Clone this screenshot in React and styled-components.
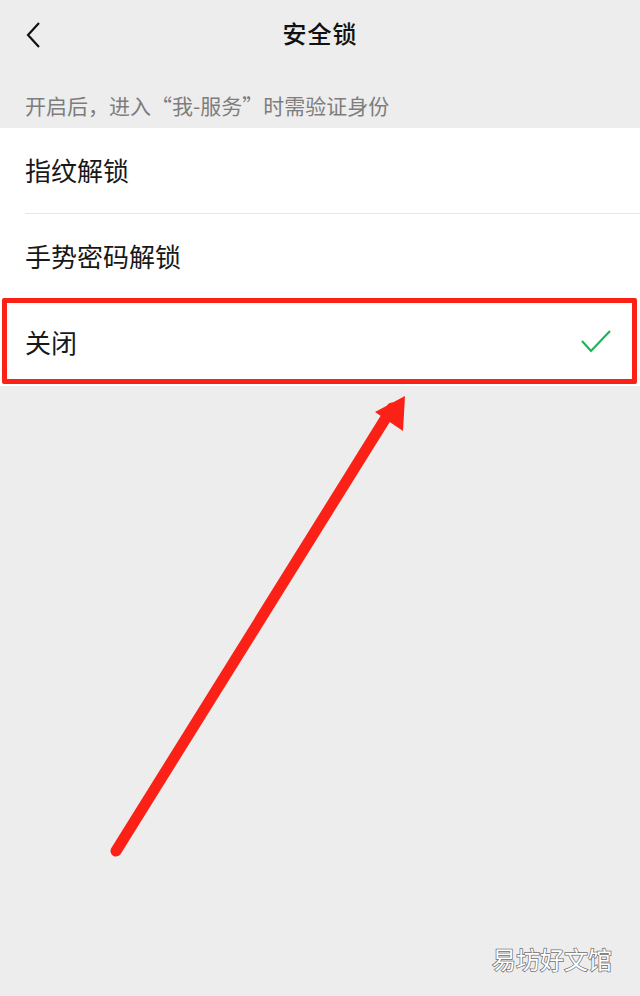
import styled, { createGlobalStyle } from 'styled-components'

const Global = createGlobalStyle`
  html, body {
    margin: 0;
    padding: 0;
    background: #ededed;
  }
  body {
    font-family: "Noto Sans CJK SC", "Noto Sans", sans-serif;
  }
`

const Page = styled.div`
  position: relative;
  width: 640px;
  height: 996px;
  overflow: hidden;
  background: #ededed;
  display: flex;
  flex-direction: column;
`

const NavBar = styled.header`
  height: 70px;
  box-sizing: border-box;
  padding-bottom: 6px;
  display: flex;
  align-items: center;
  justify-content: center;
  position: relative;
`

const BackButton = styled.button`
  position: absolute;
  left: 18px;
  top: 18px;
  width: 32px;
  height: 34px;
  padding: 0;
  border: none;
  background: transparent;
  display: flex;
  align-items: center;
  justify-content: center;
`

const Title = styled.h1`
  margin: 0;
  font-size: 24px;
  font-weight: 500;
  color: #111;
  letter-spacing: 1px;
`

const Caption = styled.p`
  margin: 0;
  height: 58px;
  box-sizing: border-box;
  padding: 21px 0 0 25px;
  font-size: 21px;
  line-height: 28px;
  color: #7d7d7d;
`

const List = styled.ul`
  margin: 0;
  padding: 0;
  list-style: none;
  background: #fff;
`

const Row = styled.li`
  position: relative;
  height: 86px;
  box-sizing: border-box;
  padding: 0 28px 3px 25px;
  display: flex;
  align-items: center;
  justify-content: space-between;
  font-size: 26px;
  color: #181818;

  & + &::before {
    content: '';
    position: absolute;
    left: 25px;
    right: 0;
    top: -1px;
    height: 1px;
    background: #e6e6e6;
  }

  ${({ $marked }) =>
    $marked &&
    `
    &::after {
      content: '';
      position: absolute;
      left: 2px;
      right: 3px;
      top: -2px;
      bottom: 2px;
      border: 5px solid #fb2117;
      border-radius: 2px;
    }
  `}
`

const Overlay = styled.svg`
  position: absolute;
  left: 0;
  top: 0;
  pointer-events: none;
`

const Watermark = styled.div`
  position: absolute;
  right: 28px;
  bottom: 20px;
  font-size: 24px;
  color: #fff;
  -webkit-text-stroke: 1.5px #707070;
  paint-order: stroke fill;
`

const Check = () => (
  <svg width="32" height="26" viewBox="0 0 32 26">
    <polyline points="2,12 11,22 30,2" fill="none" stroke="#1fb35a" strokeWidth="2.2" />
  </svg>
)

export default function App() {
  const options = [
    { label: '指纹解锁' },
    { label: '手势密码解锁' },
    { label: '关闭', checked: true },
  ]

  return (
    <Page>
      <Global />
      <NavBar>
        <BackButton>
          <svg width="20" height="28" viewBox="0 0 20 28">
            <polyline points="15,2 4,14 15,26" fill="none" stroke="#111" strokeWidth="2.2" />
          </svg>
        </BackButton>
        <Title>安全锁</Title>
      </NavBar>

      <Caption>开启后，进入“我-服务”时需验证身份</Caption>

      <List>
        {options.map((o) => (
          <Row key={o.label} $marked={o.checked}>
            <span>{o.label}</span>
            {o.checked && <Check />}
          </Row>
        ))}
      </List>

      <Overlay width="640" height="996" viewBox="0 0 640 996">
        <line x1="116" y1="851" x2="392" y2="408" stroke="#fb2117" strokeWidth="11" strokeLinecap="round" />
        <polygon points="405,396 375,412 403,431" fill="#fb2117" />
      </Overlay>

      <Watermark>易坊好文馆</Watermark>
    </Page>
  )
}
